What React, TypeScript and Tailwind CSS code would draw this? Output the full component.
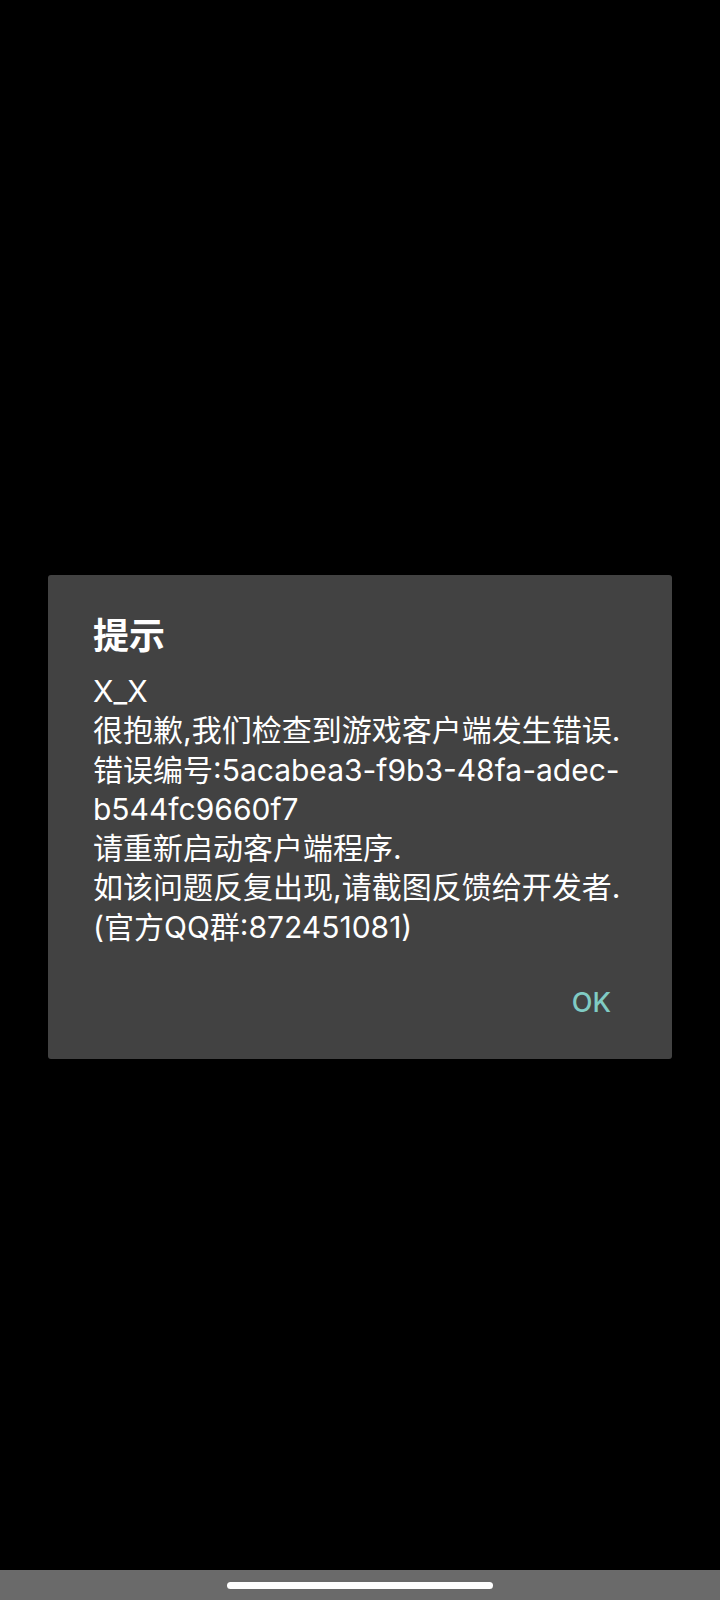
import React from "react";

const lines = [
  "X_X",
  "很抱歉,我们检查到游戏客户端发生错误.",
  "错误编号:5acabea3-f9b3-48fa-adec-",
  "b544fc9660f7",
  "请重新启动客户端程序.",
  "如该问题反复出现,请截图反馈给开发者.",
  "(官方QQ群:872451081)",
];

const font = { fontFamily: 'Inter, "Noto Sans CJK SC", sans-serif' };

export default function App() {
  return (
    <div className="flex h-[1600px] w-[720px] flex-col bg-black" style={font}>
      {/* screen with the dialog */}
      <div className="flex-1 px-[48px] pt-[575px]">
        <div className="w-[624px] rounded-[3px] bg-[#424242] pr-[41px] pl-[45px] pt-[39px] pb-[40px] shadow-lg">
          <div className="h-[44px] text-[36px] leading-[44px] font-bold text-white">提示</div>
          <div className="mt-[14px] text-[30px] leading-[39.3px] text-white">
            {lines.map((line) => (
              <div key={line} className="whitespace-nowrap">
                {line}
              </div>
            ))}
          </div>
          <div className="mt-[40px] flex justify-end">
            <button className="mr-[20px] h-[32px] text-[27px] leading-[32px] font-medium text-[#80cbc4]">
              OK
            </button>
          </div>
        </div>
      </div>

      {/* navigation bar */}
      <div className="flex h-[30px] justify-center bg-[#6a6a6a] pt-[12px]">
        <div className="h-[7px] w-[266px] rounded-full bg-white" />
      </div>
    </div>
  );
}
